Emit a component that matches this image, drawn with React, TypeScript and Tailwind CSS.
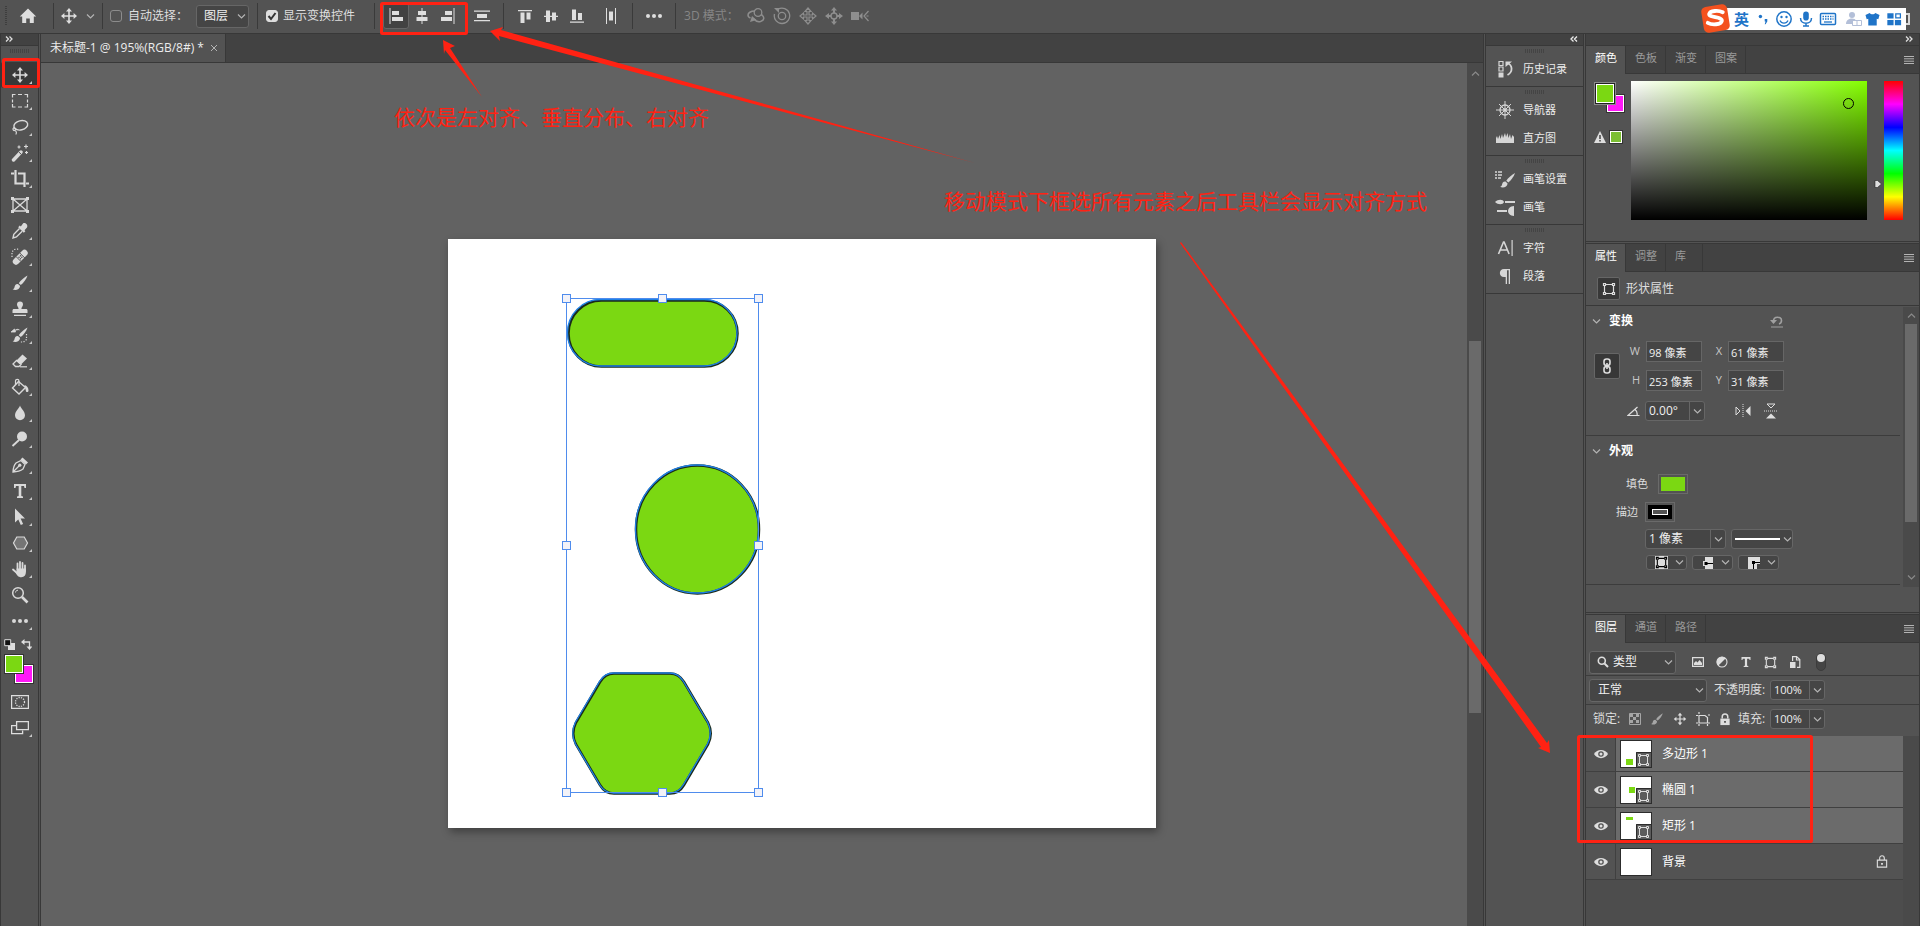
import { useState } from "react";
import type { ReactNode } from "react";

type IconProps = { children: ReactNode; box?: string; className?: string };

const Icon = ({ children, box = "0 0 18 18", className = "size-[18px]" }: IconProps) => (
    <svg viewBox={box} className={`shrink-0 ${className}`} fill="currentColor" stroke="none" aria-hidden="true">
        {children}
    </svg>
);

const line = { fill: "none", stroke: "currentColor" };

const MoveIcon = ({ className }: { className?: string }) => (
    <Icon className={className}>
        <path d="M9 1l3 3.4H9.8v3.8h3.8V6L17 9l-3.400 3V9.800H9.800v3.800H12L9 17l-3-3.400h2.200V9.800H4.400V12L1 9l3.400-3v2.200h3.800V4.400H6z" />
    </Icon>
);

const Chevron = ({ className = "text-[#b4b4b4]" }: { className?: string }) => (
    <Icon box="0 0 9 9" className={`size-[9px] ${className}`}>
        <path d="M1 2.500l3.500 3.500L8 2.500" {...line} strokeWidth="1.200" />
    </Icon>
);

const PathIcon = ({ className = "size-[14px]" }: { className?: string }) => (
    <Icon box="0 0 14 14" className={className}>
        <path d="M4 2.500h6M4 11.500h6M2.500 4v6M11.500 4v6" {...line} strokeWidth="1.200" />
        <path d="M1.500 1.500h2v2h-2zM10.500 1.500h2v2h-2zM1.500 10.500h2v2h-2zM10.500 10.500h2v2h-2z" {...line} strokeWidth="1.200" />
    </Icon>
);

const BrushShape = () => (
    <>
        <path d="M16.500 1.500c-3 1.500-7 5-8.700 7.700l2 1.800C12.400 9 15.500 5 16.500 1.500z" />
        <path d="M7 10c-2.500-.2-3.200 1.600-3.600 3.400-.2 1.200-1.200 1.700-2 1.900 2.600 1.600 7.300.9 7.700-3.200z" />
    </>
);

const tools: { name: string; flyout?: boolean; icon: ReactNode }[] = [
    { name: "移动工具", flyout: true, icon: <MoveIcon className="size-[18px]" /> },
    {
        name: "矩形选框工具",
        flyout: true,
        icon: <Icon><path d="M1.500 5.500v-3h3M7 2.500h4M13.500 2.500h3v3M16.500 7.500v3M16.500 12v3h-3M11 15h-4M4.500 15h-3v-3M1.500 10.500v-3" {...line} strokeWidth="1.200" /></Icon>,
    },
    {
        name: "套索工具",
        flyout: true,
        icon: (
            <Icon>
                <ellipse cx="9.800" cy="7.300" rx="7" ry="4.600" transform="rotate(-14 9.800 7.300)" {...line} strokeWidth="1.400" />
                <path d="M3 9.500c-1.800 1.300-1 3.300.6 3 1.700-.3 1.500-2.600 0-2.500M4 12.500c1.500.8 1.800 2.500.8 4" {...line} strokeWidth="1.200" />
            </Icon>
        ),
    },
    {
        name: "魔棒工具",
        flyout: true,
        icon: (
            <Icon>
                <path d="M2.500 16l7.500-8" {...line} strokeWidth="3.400" strokeLinecap="round" />
                <path d="M8 8.200l2.300 2.100" stroke="#535353" strokeWidth="1" />
                <path d="M8 1.500v3M6.500 3h3M15 .5v4M13 2.500h4M15.500 7v3M14 8.500h3" {...line} strokeWidth="1.200" />
            </Icon>
        ),
    },
    {
        name: "裁剪工具",
        flyout: true,
        icon: <Icon><path d="M4.500 0v13.500H13M0 3.500h3M7 3.500h6.500V17M15 13.500h3" {...line} strokeWidth="2.200" /></Icon>,
    },
    {
        name: "图框工具",
        icon: (
            <Icon>
                <path d="M2 3h14v12H2zM2 3l14 12M16 3L2 15" {...line} strokeWidth="1.300" />
                <path d="M0 1h3v3H0zM15 1h3v3h-3zM0 14h3v3H0zM15 14h3v3h-3z" />
            </Icon>
        ),
    },
    {
        name: "吸管工具",
        flyout: true,
        icon: (
            <Icon>
                <path d="M12 1.500c1.600-1.400 5.500 1.200 4 4l-2.500 2.700.9 1-1.600 1.600-5.600-5.600 1.600-1.600 1 .9z" />
                <path d="M8.500 6.500L2.800 12.300l-.8 3.700 3.400-1 5.800-5.700" {...line} strokeWidth="1.400" />
            </Icon>
        ),
    },
    {
        name: "污点修复画笔工具",
        flyout: true,
        icon: (
            <Icon>
                <path d="M5 13.500l8.500-8.500" {...line} strokeWidth="6.400" strokeLinecap="round" />
                <path d="M5 8.500l5 5M8.800 5l5 5" stroke="#535353" strokeWidth="1" />
                <path d="M9.500 7.700l.01.01M8 9.200l.01.01M10.800 9.200l.01.01M9.500 10.700l.01.01" stroke="#535353" strokeWidth="1.500" strokeLinecap="round" />
                <path d="M1 9V4l2-2.500 5-.5" {...line} strokeWidth="1.200" strokeDasharray="1.200 1.600" />
            </Icon>
        ),
    },
    { name: "画笔工具", flyout: true, icon: <Icon><BrushShape /></Icon> },
    {
        name: "仿制图章工具",
        flyout: true,
        icon: (
            <Icon>
                <path d="M9 1.500a3 3 0 0 1 3 3c0 1.800-1.600 2.500-1.600 4.500H15c1 0 1.500.6 1.500 1.500V13h-15v-2.500C1.500 9.600 2 9 3 9h4.600c0-2-1.600-2.700-1.600-4.500a3 3 0 0 1 3-3zM3 14.700h12V16H3z" />
            </Icon>
        ),
    },
    {
        name: "历史记录画笔工具",
        flyout: true,
        icon: (
            <Icon>
                <BrushShape />
                <path d="M0 6l3.500-3 1 3zM4 4.500c1.500-1.500 3-1.500 4.500-.5" stroke="currentColor" strokeWidth=".8" />
                <path d="M15.500 8v5.500l-3 2.500h-3" {...line} strokeWidth="1.200" strokeDasharray="1.200 1.500" />
            </Icon>
        ),
    },
    {
        name: "橡皮擦工具",
        flyout: true,
        icon: (
            <Icon>
                <path d="M11.500 2.500l4.500 4-6 6L5.500 8.500z" />
                <path d="M5.500 8.500L2 12l2.500 2.500h3.500l2-2z" {...line} strokeWidth="1.300" />
                <path d="M9 14.800h7" {...line} strokeWidth="1.200" />
            </Icon>
        ),
    },
    {
        name: "油漆桶工具",
        flyout: true,
        icon: (
            <Icon>
                <path d="M7.500 3.500l7 6-6.500 6.500-6.500-6z" {...line} strokeWidth="1.400" />
                <path d="M4.500 7V3c0-2.300 3.500-2.300 3.500 0v5" {...line} strokeWidth="1.200" />
                <path d="M13.500 7c2.500.7 4 2.500 4 5.500 0 2-2.700 2-2.700 0z" />
            </Icon>
        ),
    },
    { name: "模糊工具", flyout: true, icon: <Icon><path d="M9 1.500c1 3 5 6 5 9.800a5 5 0 0 1-10 0C4 7.500 8 4.500 9 1.500z" /></Icon> },
    {
        name: "减淡工具",
        flyout: true,
        icon: (
            <Icon>
                <circle cx="11" cy="6.500" r="5" />
                <path d="M8 10l-6.500 6" {...line} strokeWidth="1.900" />
            </Icon>
        ),
    },
    {
        name: "钢笔工具",
        flyout: true,
        icon: (
            <Icon>
                <path d="M2 16c.2-4 1.500-7.500 3-9l5-2.500 4 4-2 4.500c-2 1.500-6 2.800-10 3zM2 16l6.500-6.500" {...line} strokeWidth="1.300" />
                <circle cx="8.800" cy="9.200" r="1.600" />
                <path d="M11.500 1.500l5.500 5-2 2-5.500-5z" />
            </Icon>
        ),
    },
    {
        name: "文字工具",
        flyout: true,
        icon: <Icon><path d="M3 2h12v4h-1.500L13 4h-2.700v10l1.700.6V16H6v-1.400l1.700-.6V4H5l-.5 2H3z" /></Icon>,
    },
    { name: "路径选择工具", flyout: true, icon: <Icon><path d="M4 .5v14l3.300-3 2.500 5.500 2.300-1-2.500-5.500H14z" /></Icon> },
    {
        name: "多边形工具",
        flyout: true,
        icon: <Icon><path d="M5.800 3h7.400L16.500 9l-3.300 6H5.800L2.500 9z" fill="#757575" stroke="currentColor" strokeWidth="1.200" /></Icon>,
    },
    {
        name: "抓手工具",
        flyout: true,
        icon: (
            <Icon>
                <path d="M6.500 10V3.500M9 9.500V2M11.500 10V3M14 11V5.500M6 13L2 9.500" {...line} strokeWidth="1.800" strokeLinecap="round" />
                <path d="M5.600 8.500h9.300v3.500c0 3-1.600 5.200-4.500 5.200-3.500 0-4.600-2.200-6-5l1.200-.7z" />
            </Icon>
        ),
    },
    {
        name: "缩放工具",
        icon: (
            <Icon>
                <circle cx="7" cy="7" r="5.300" {...line} strokeWidth="1.500" />
                <path d="M4.500 6.500c.2-1.500 1-2.200 2.500-2.300" {...line} />
                <path d="M11 11l5.500 5.500" {...line} strokeWidth="2.600" />
            </Icon>
        ),
    },
    {
        name: "编辑工具栏",
        flyout: true,
        icon: <Icon><circle cx="3" cy="9" r="2" /><circle cx="9" cy="9" r="2" /><circle cx="15" cy="9" r="2" /></Icon>,
    },
];

const alignIcons = {
    left: <Icon box="0 0 16 16" className="size-[16px]"><path d="M1.500 0h1v16h-1zM4 3h7v4H4zM4 9h11v4H4z" /></Icon>,
    center: <Icon box="0 0 16 16" className="size-[16px]"><path d="M7.500 0h1v16h-1zM4 3h8v4H4zM2.500 9h11v4h-11z" /></Icon>,
    right: <Icon box="0 0 16 16" className="size-[16px]"><path d="M13.500 0h1v16h-1zM5 3h7v4H5zM1 9h11v4H1z" /></Icon>,
    vspread: <Icon box="0 0 16 16" className="size-[16px]"><path d="M0 2.500h16v1.300H0zM3 6h10v4H3zM0 12h16v1.300H0z" /></Icon>,
    top: <Icon box="0 0 16 16" className="size-[16px]"><path d="M1 2h14v1.200H1zM3.500 4.500h4V15h-4zM9.500 4.500h4v7h-4z" /></Icon>,
    middle: <Icon box="0 0 16 16" className="size-[16px]"><path d="M1 7.800h14V9H1zM3 2.500h4v11.500H3zM9 4.500h4v8H9z" /></Icon>,
    bottom: <Icon box="0 0 16 16" className="size-[16px]"><path d="M1 13.500h14v1.200H1zM3 1.500h4V12H3zM9 5h4v7H9z" /></Icon>,
    hspread: <Icon box="0 0 16 16" className="size-[16px]"><path d="M3 0h1v16H3zM6 3.500h4v9H6zM12 0h1v16h-1z" /></Icon>,
};

const Divider = ({ className = "" }: { className?: string }) => <span className={`h-[26px] w-px bg-[#3a3a3a] ${className}`} />;

const Grip = ({ className = "" }: { className?: string }) => (
    <span className={`mx-auto h-[4px] w-[20px] bg-[repeating-linear-gradient(90deg,#444_0_1px,transparent_1px_2px)] ${className}`} />
);

const IconButton = ({ label, pressed, children }: { label: string; pressed?: boolean; children: ReactNode }) => (
    <button
        type="button"
        aria-label={label}
        className={`flex h-[26px] w-[26px] items-center justify-center rounded-[3px] border ${pressed ? "border-[#666] bg-[#424242]" : "border-transparent"}`}
    >
        {children}
    </button>
);

const SelectBox = ({ label, value, className, lead }: { label: string; value: string; className: string; lead?: ReactNode }) => (
    <div className={`relative flex items-center rounded-[3px] border border-[#666] bg-[#454545] ${className}`}>
        {lead}
        <select aria-label={label} className="h-full w-full appearance-none bg-transparent text-[12px] text-[#f0f0f0] outline-none">
            <option>{value}</option>
        </select>
        <span className="pointer-events-none absolute right-[2px]"><Chevron /></span>
    </div>
);

// Select whose value is a drawing
const GraphicSelect = ({ label, className, children }: { label: string; className: string; children: ReactNode }) => (
    <div className={`relative flex items-center justify-between rounded-[3px] border border-[#666] bg-[#454545] ${className}`}>
        {children}
        <Chevron />
        <select aria-label={label} className="absolute inset-0 opacity-0"><option>{label}</option></select>
    </div>
);

const Combo = ({ label, value, className, text = "text-[12px]" }: { label: string; value: string; className: string; text?: string }) => (
    <div className={`flex h-[20px] rounded-[3px] border border-[#666] bg-[#454545] ${className}`}>
        <input aria-label={label} defaultValue={value} className={`min-w-0 flex-1 bg-transparent pl-[3px] text-[#f0f0f0] outline-none ${text}`} />
        <button type="button" aria-label={`${label}选项`} className="flex w-[15px] items-center justify-center border-l border-[#666]">
            <Chevron />
        </button>
    </div>
);

const OptionsBar = () => {
    const [auto, setAuto] = useState(false);
    const [showTransform, setShowTransform] = useState(true);

    return (
        <header className="flex h-[34px] items-center border-b border-[#383838] pb-px text-[12px] text-[#dedede]">
            <span className="ml-[5px] h-[20px] w-[2px] bg-[repeating-linear-gradient(#3e3e3e_0_1px,transparent_1px_2px)]" />
            <button type="button" aria-label="主页" className="ml-[12px]">
                <Icon><path d="M9 1.500L.8 9.500h2.400V16h4v-4.500h3.600V16h4V9.500h2.400z" /></Icon>
            </button>
            <Divider className="ml-[16px]" />
            <button type="button" aria-label="移动工具预设" className="ml-[6px] flex items-center gap-[8px]">
                <MoveIcon className="size-[18px]" />
                <Chevron />
            </button>
            <Divider className="ml-[7px]" />
            <label className="ml-[7px] flex items-center gap-[6px]">
                <input type="checkbox" checked={auto} onChange={(e) => setAuto(e.target.checked)} className="size-[12px] appearance-none rounded-[3px] border border-[#8c8c8c] checked:bg-[#dedede]" />
                <span>自动选择：</span>
            </label>
            <SelectBox label="自动选择" value="图层" className="ml-[8px] h-[23px] w-[53px] pl-[7px]" />
            <Divider className="ml-[8px]" />
            <label className="relative ml-[8px] flex items-center gap-[5px]">
                <input type="checkbox" checked={showTransform} onChange={(e) => setShowTransform(e.target.checked)} className="size-[12px] appearance-none rounded-[3px] border border-[#8c8c8c] checked:border-[#dedede] checked:bg-[#dedede]" />
                {showTransform && (
                    <svg viewBox="0 0 12 12" className="pointer-events-none absolute left-0 size-[12px]">
                        <path d="M2.500 6l2.500 3 4.500-6" fill="none" stroke="#333" strokeWidth="2" />
                    </svg>
                )}
                <span>显示变换控件</span>
            </label>
            <Divider className="ml-[19px]" />
            <div className="ml-[8px] flex">
                <IconButton label="左对齐" pressed>{alignIcons.left}</IconButton>
                <IconButton label="水平居中对齐">{alignIcons.center}</IconButton>
                <IconButton label="右对齐">{alignIcons.right}</IconButton>
            </div>
            <div className="ml-[8px] flex"><IconButton label="垂直分布">{alignIcons.vspread}</IconButton></div>
            <Divider className="ml-[8px]" />
            <div className="ml-[8px] flex">
                <IconButton label="顶对齐">{alignIcons.top}</IconButton>
                <IconButton label="垂直居中对齐">{alignIcons.middle}</IconButton>
                <IconButton label="底对齐">{alignIcons.bottom}</IconButton>
            </div>
            <div className="ml-[8px] flex"><IconButton label="水平分布">{alignIcons.hspread}</IconButton></div>
            <Divider className="ml-[8px]" />
            <div className="ml-[8px] flex">
                <IconButton label="更多选项">
                    <Icon><circle cx="3" cy="9" r="2" /><circle cx="9" cy="9" r="2" /><circle cx="15" cy="9" r="2" /></Icon>
                </IconButton>
            </div>
            <Divider className="ml-[8px]" />
            <span className="ml-[8px] w-[59px] whitespace-nowrap text-[#868686]">3D 模式：</span>
            <div className="flex text-[#8e8e8e]">
                <IconButton label="环绕移动 3D 相机">
                    <Icon>
                        <circle cx="11" cy="5.500" r="3.800" {...line} strokeWidth="1.300" />
                        <path d="M8 4C3.500 4 1 6 1 8c0 1.500 1 2.500 2.500 3M14 7.500c4 2 3.500 6-.5 7-2.500.5-5-.5-6.500-2.500" {...line} strokeWidth="1.500" />
                        <path d="M3 15l2-6 4.500 4z" />
                    </Icon>
                </IconButton>
                <IconButton label="滚动 3D 相机">
                    <Icon>
                        <circle cx="9" cy="9" r="3.700" {...line} strokeWidth="1.300" />
                        <path d="M5 2.200A7.700 7.700 0 1 1 1.500 7" {...line} strokeWidth="1.300" />
                        <path d="M1 1h5v5z" />
                    </Icon>
                </IconButton>
                <IconButton label="平移 3D 相机">
                    <Icon><path d="M9 1l3 3.500h-2V8h3.500V6L17 9l-3.500 3v-2H10v3.500h2L9 17l-3-3.500h2V10H4.500v2L1 9l3.500-3v2H8V4.500H6z" {...line} strokeWidth="1.200" /></Icon>
                </IconButton>
                <IconButton label="滑动 3D 相机">
                    <Icon>
                        <circle cx="9" cy="9" r="3" {...line} strokeWidth="1.400" />
                        <path d="M9 0l3 3.500H10V6H8V3.500H6zM9 18l-3-3.500h2V12h2v2.500h2zM0 9l4-3v2h2v2H4v2zM18 9l-4-3v2h-2v2h2v2z" />
                    </Icon>
                </IconButton>
                <IconButton label="变焦 3D 相机">
                    <Icon><path d="M0 5h8v8H0zM8 9l3.500-3.500v7z" /><path d="M17.500 4l-4.500 5 4.500 5M15.500 9h2" {...line} strokeWidth="1.200" /></Icon>
                </IconButton>
            </div>
        </header>
    );
};

const ImeBar = () => (
    <div className="absolute top-[4px] right-[10px] flex h-[29px] items-center">
        <svg viewBox="0 0 30 30" className="z-10 -mr-[10px] size-[29px]">
            <rect x="1.500" y="1.500" width="27" height="27" rx="5" transform="rotate(-9 15 15)" fill="#f4511e" />
            <path d="M22.500 8.500c-4-2-13-2-14 1.800-.8 4.200 14 2.500 13 7.200-1 4-10 4.500-14.500 2" fill="none" stroke="#fff" strokeWidth="4" strokeLinecap="round" />
        </svg>
        <div className="flex h-[22px] items-center gap-[6px] bg-white pr-[4px] pl-[14px] text-[#1f74c8]">
            <span className="w-[17px] text-[15px] leading-[22px] font-bold">英</span>
            <Icon box="0 0 14 18" className="h-[18px] w-[12px]"><circle cx="4" cy="6" r="2" /><path d="M9 9h3v3l-2 3h-1l1-3H9z" /></Icon>
            <Icon>
                <circle cx="9" cy="9" r="7.200" {...line} strokeWidth="1.500" />
                <circle cx="6.500" cy="7" r="1.200" /><circle cx="11.500" cy="7" r="1.200" />
                <path d="M5 10.500c1.500 3.500 6.500 3.500 8 0" {...line} strokeWidth="1.300" />
            </Icon>
            <Icon box="0 0 14 18" className="h-[18px] w-[14px]"><rect x="4.200" y="1.500" width="5.600" height="9" rx="2.800" /><path d="M1.500 8c0 7 11 7 11 0M7 13v3M4 16h6" {...line} strokeWidth="1.500" /></Icon>
            <Icon>
                <rect x="1.500" y="3.500" width="15" height="11" rx="1" {...line} strokeWidth="1.500" />
                <path d="M3.500 6.500h11M3.500 9h11" {...line} strokeWidth="1.500" strokeDasharray="1.500 1" /><path d="M5 12h8" {...line} strokeWidth="1.300" />
            </Icon>
            <Icon className="ml-[2px] -mr-[4px] size-[18px] text-[#b3bfd8]">
                <circle cx="7" cy="5" r="3" /><path d="M1 14c0-6 9-7 10-3H7v3z" />
                <path d="M7.500 10.500h9v5h-9zM12 10.500v5" {...line} />
            </Icon>
            <Icon box="0 0 16 18" className="h-[18px] w-[15px]"><path d="M5 2.500c1 2 5 2 6 0l4.500 2.300-1.300 4.400-1.700-.5V16h-9V8.700l-1.700.5L.5 4.800z" /></Icon>
            <Icon className="size-[16px]"><path d="M1.500 2.500h7v6h-7zM1.500 10h7v6h-7zM10 10h7v6h-7z" /><path d="M11 3.200h5.200v4.600H11z" {...line} strokeWidth="1.400" /></Icon>
        </div>
        <span className="h-[12px] w-[4px] border-2 border-l-0 border-[#d6d6d6]" />
    </div>
);

const Toolbox = () => (
    <aside className="flex w-[39px] flex-col border-x border-[#383838]">
        <div className="h-[12px] border-b border-[#383838] bg-[#424242] pl-[4px]">
            <Icon box="0 0 8 10" className="h-[10px] w-[8px]"><path d="M1 2.500L3.500 5 1 7.500M4.500 2.500L7 5 4.500 7.500" {...line} strokeWidth="1.300" /></Icon>
        </div>
        <Grip className="mt-[3px]" />
        <div className="mt-[9px] flex flex-col text-[#d9d9d9]">
            {tools.map((tool, i) => (
                <button
                    key={tool.name}
                    type="button"
                    aria-label={tool.name}
                    className={`relative flex h-[26px] items-center justify-center ${i === 0 ? "rounded-[2px] bg-[#383838]" : ""}`}
                >
                    {tool.icon}
                    {tool.flyout && (
                        <svg viewBox="0 0 3 3" className="absolute right-[6px] bottom-[4px] size-[3px]"><path d="M3 0v3H0z" fill="#c8c8c8" /></svg>
                    )}
                </button>
            ))}
        </div>
        <div className="mt-[5px] flex justify-between pr-[6px] pl-[3px]">
            <button type="button" aria-label="默认前景色和背景色">
                <Icon box="0 0 11 11" className="size-[11px]"><path d="M4 4h7v7H4z" /><path d="M.7.7h6v6h-6z" fill="#111" stroke="currentColor" /></Icon>
            </button>
            <button type="button" aria-label="切换前景色和背景色">
                <Icon box="0 0 11 11" className="size-[11px]"><path d="M3 3h5.500v5" {...line} strokeWidth="1.300" /><path d="M0 3l3.500-3v6zM8.500 11l-3-3.500h6z" /></Icon>
            </button>
        </div>
        <div className="mt-[4px] grid h-[30px] grid-cols-[10px_10px_10px] grid-rows-[10px_10px_10px] pl-[3px]">
            <button type="button" aria-label="背景色" className="col-span-2 col-start-2 row-span-2 row-start-2 border border-[#333] bg-[#ff19f8] ring-1 ring-white ring-inset" />
            <button type="button" aria-label="前景色" className="z-10 col-span-2 col-start-1 row-span-2 row-start-1 border border-[#333] bg-[#7bd812] ring-1 ring-white ring-inset" />
        </div>
        <button type="button" aria-label="快速蒙版" className="mt-[5px] flex h-[26px] items-center justify-center">
            <Icon><path d="M.6 2.600h16.800v12.800H.6z" {...line} strokeWidth="1.200" /><circle cx="9" cy="9" r="4.500" {...line} strokeWidth="1.300" strokeDasharray="1.200 1.200" /></Icon>
        </button>
        <button type="button" aria-label="屏幕模式" className="relative flex h-[26px] items-center justify-center">
            <Icon><path d="M5.600 2.600h11.800v8H5.600z" {...line} strokeWidth="1.300" /><path d="M5 6.600H.6v8h11v-3" {...line} strokeWidth="1.300" /></Icon>
            <svg viewBox="0 0 3 3" className="absolute right-[6px] bottom-[4px] size-[3px]"><path d="M3 0v3H0z" fill="#c8c8c8" /></svg>
        </button>
    </aside>
);

const hexagon =
    "M166 434.500H222Q231 434.500 236 443L260 483.500Q265.500 494.500 260 505.500L236 546Q231 554.500 222 554.500H166Q157 554.500 152 546L128 505.500Q122.500 494.500 128 483.500L152 443Q157 434.500 166 434.500Z";

const handles = [
    [118, 59], [214, 59], [310, 59],
    [118, 306], [310, 306],
    [118, 553], [214, 553], [310, 553],
];

const Artboard = () => (
    <div className="absolute top-[176px] left-[407px] h-[589px] w-[708px] bg-white shadow-[2px_4px_8px_rgba(0,0,0,0.35)]">
        <svg viewBox="0 0 708 589" className="h-full w-full" fill="none">
            <g fill="#7bd812" stroke="#1a2a1a" strokeWidth="2.500">
                <rect x="120.500" y="61.500" width="169" height="66" rx="33" />
                <ellipse cx="249.500" cy="290.500" rx="61.500" ry="64" />
                <path d={hexagon} />
            </g>
            <g stroke="#1f80e6" strokeWidth="1.300">
                <rect x="119.500" y="60.500" width="169.500" height="66.500" rx="33" />
                <ellipse cx="249" cy="290" rx="61.500" ry="64" />
                <path d={hexagon} transform="translate(-.5 -.5)" />
            </g>
            <rect x="118.500" y="59.500" width="192" height="494" stroke="#4f8ced" />
            {handles.map(([x, y]) => (
                <rect key={`${x}-${y}`} x={x - 3.5} y={y - 3.5} width="8" height="8" fill="#f2f2f8" stroke="#4f8ced" />
            ))}
        </svg>
    </div>
);

const Document = () => (
    <main className="ml-px flex min-w-0 flex-1 flex-col border-x border-[#383838]">
        <div className="flex h-[29px] border-b border-[#383838] bg-[#424242]">
            <div className="flex items-center gap-[6px] border-r border-[#383838] bg-[#535353] pr-[7px] pl-[9px] text-[12px] whitespace-nowrap text-[#ececec]">
                <span>未标题-1 @ 195%(RGB/8#) *</span>
                <button type="button" aria-label="关闭">
                    <Icon box="0 0 8 8" className="size-[8px] text-[#b4b4b4]"><path d="M1 1l6 6M7 1L1 7" {...line} /></Icon>
                </button>
            </div>
        </div>
        <div className="flex flex-1">
            <div className="relative flex-1 overflow-hidden bg-[#626262]"><Artboard /></div>
            <div className="flex w-[16px] flex-col items-center bg-[#4a4a4a]">
                <Chevron className="mt-[6px] rotate-180 text-[#8a8a8a]" />
                <span className="mt-[263px] h-[372px] w-[12px] bg-[#6a6a6a]" />
            </div>
        </div>
    </main>
);

const dockGroups: { label: string; icon: ReactNode }[][] = [
    [
        {
            label: "历史记录",
            icon: <Icon><path d="M3 1.500h4v4H3zM3 7h4v4H3z" {...line} strokeWidth="1.200" /><path d="M2.500 12.500h5v5h-5z" /><path d="M11 3c6 2 6 9 .5 12" {...line} strokeWidth="1.800" /><path d="M9.500 7V1.500H16z" /></Icon>,
        },
    ],
    [
        {
            label: "导航器",
            icon: <Icon><circle cx="9" cy="9" r="5" {...line} strokeWidth="1.300" /><path d="M9 0v18M0 9h18M3 3l12 12M15 3L3 15" {...line} strokeWidth="1" /><circle cx="9" cy="9" r="1.800" /></Icon>,
        },
        {
            label: "直方图",
            icon: <Icon><path d="M0 14V9l1-2 1 3 1.500-4 1 4L6 5l1 4 2-5 1 4 1.500-4 1 5L14 5l1 5 1.500-4L18 8v6z" /></Icon>,
        },
    ],
    [
        {
            label: "画笔设置",
            icon: <Icon box="0 0 20 18" className="h-[18px] w-[20px]"><path d="M0 2h2M3 2h4M0 5h2M3 5h4M0 8h2M3 8h3" {...line} strokeWidth="1.300" /><g transform="translate(3.500 1.500)"><BrushShape /></g></Icon>,
        },
        {
            label: "画笔",
            icon: <Icon box="0 0 20 18" className="h-[18px] w-[20px]"><path d="M0 4c3-3 8-3 9 0-1 3-6 3-9 0zM10 3h10v2H10zM2 12h10v2H2zM19 8v10c-4 0-6-3-6-5s2-5 6-5z" /></Icon>,
        },
    ],
    [
        {
            label: "字符",
            icon: <Icon><path d="M2.500 15L7.500 3h.6l5 12M4 11h7.500" {...line} strokeWidth="1.600" /><path d="M15.500 1h1.200v16h-1.200z" /></Icon>,
        },
        {
            label: "段落",
            icon: <Icon><path d="M8 2h6v15h-1.300V3.300h-1.700V17H9.700v-7H8C2.500 10 2.500 2 8 2z" /></Icon>,
        },
    ],
];

const Dock = () => (
    <aside className="ml-px w-[99px] border-x border-[#383838] text-[11px] text-[#ececec]">
        <div className="flex h-[12px] justify-end border-b border-[#383838] bg-[#424242] pr-[5px]">
            <Icon box="0 0 8 10" className="h-[10px] w-[8px]"><path d="M3.500 2.500L1 5l2.500 2.500M7 2.500L4.500 5 7 7.500" {...line} strokeWidth="1.300" /></Icon>
        </div>
        {dockGroups.map((group, i) => (
            <div key={i} className="flex flex-col border-b border-[#383838] pt-[3px] pb-[3px]">
                <Grip className="mb-[2px]" />
                {group.map((item) => (
                    <button key={item.label} type="button" className="flex h-[28px] items-center gap-[8px] pl-[9px]">
                        <span className="flex w-[20px] justify-center text-[#d6d6d6]">{item.icon}</span>
                        {item.label}
                    </button>
                ))}
            </div>
        ))}
    </aside>
);

const PanelTabs = ({ tabs }: { tabs: string[] }) => (
    <div className="flex h-[28px] bg-[#424242] text-[11px]">
        {tabs.map((tab, i) => (
            <button
                key={tab}
                type="button"
                className={`border-r border-[#383838] pb-[3px] pl-[9px] text-left ${tab.length > 1 ? "w-[40px]" : "w-[37px]"} ${i === 0 ? "bg-[#535353] text-white" : "border-b text-[#9a9a9a]"}`}
            >
                {tab}
            </button>
        ))}
        <div className="flex flex-1 items-center justify-end border-b border-[#383838] pr-[5px]">
            <button type="button" aria-label="面板菜单">
                <Icon box="0 0 10 8" className="h-[8px] w-[10px] text-[#b4b4b4]"><path d="M0 .5h10M0 2.800h10M0 5.200h10M0 7.500h10" {...line} /></Icon>
            </button>
        </div>
    </div>
);

const ColorPanel = () => (
    <section className="border-b border-[#383838]">
        <PanelTabs tabs={["颜色", "色板", "渐变", "图案"]} />
        <div className="flex h-[167px] pt-[7px] pl-[8px]">
            <div className="w-[37px] pt-[2px]">
                <div className="ml-px grid grid-cols-[11px_9px_10px] grid-rows-[11px_10px_9px]">
                    <button type="button" aria-label="背景色" className="col-span-2 col-start-2 row-span-2 row-start-2 border border-[#333] bg-[#ff19f8] ring-1 ring-white ring-inset" />
                    <button type="button" aria-label="前景色" className="z-10 col-span-2 col-start-1 row-span-2 row-start-1 border border-[#222] bg-[#7bd812] ring-1 ring-white outline outline-[#8a8a8a] ring-inset" />
                </div>
                <div className="mt-[17px] flex items-center gap-[3px]">
                    <Icon box="0 0 12 12" className="size-[12px]"><path d="M6 0l6 12H0z" /><path d="M6 4v4M6 9v1.500" stroke="#444" strokeWidth="1.500" /></Icon>
                    <span className="size-[14px] border border-[#333] bg-[#7cbf34] ring-1 ring-white ring-inset" />
                </div>
            </div>
            <div className="relative h-[139px] flex-1 bg-[linear-gradient(to_top,#000,transparent),linear-gradient(to_right,#fff,#84ff00)]">
                <span className="absolute top-[17px] right-[13px] size-[11px] rounded-full border border-black" />
            </div>
            <div className="relative mr-[16px] ml-[17px] h-[139px] w-[19px] bg-[linear-gradient(#f00,#f0f,#00f,#0ff,#0f0,#ff0,#f00)]">
                <svg viewBox="0 0 8 8" className="absolute top-[99px] -left-[10px] size-[8px]"><path d="M1 .5h2.500l4 3.500-4 3.500H1z" fill="#dedede" stroke="#222" strokeWidth=".6" /></svg>
                <input type="range" aria-label="色相" className="absolute inset-0 h-full w-full opacity-0" />
            </div>
        </div>
    </section>
);

const NumberField = ({ label, value }: { label: string; value: string }) => (
    <label className="flex items-center justify-end gap-[6px] text-[11px] text-[#c8c8c8]">
        {label}
        <input defaultValue={value} className="h-[21px] w-[56px] border border-[#666] bg-[#454545] pl-[2px] text-[11px] text-[#f0f0f0] outline-none" />
    </label>
);

const PropertiesPanel = () => (
    <section className="mt-px flex flex-col border-y border-[#383838]">
        <PanelTabs tabs={["属性", "调整", "库"]} />
        <div className="flex h-[34px] items-center gap-[6px] border-b border-[#383838] pl-[11px] text-[12px] text-[#dedede]">
            <span className="flex size-[23px] items-center justify-center rounded-[2px] border border-[#666] bg-[#383838]"><PathIcon /></span>
            形状属性
        </div>
        <div className="flex h-[306px]">
            <div className="min-w-0 flex-1 pr-[3px] text-[#dedede]">
                <div className="h-[130px] border-b border-[#3c3c3c] pt-[5px]">
                    <div className="flex h-[20px] items-center pl-[6px]">
                        <Chevron />
                        <h3 className="ml-[8px] w-[161px] text-[12px] font-bold text-white">变换</h3>
                        <button type="button" aria-label="重置变换">
                            <Icon box="0 0 14 13" className="h-[13px] w-[14px] text-[#a0a0a0]"><path d="M3.500 6c0-5 8-5 8-.5 0 2-1 3-2.500 3.500" {...line} strokeWidth="1.600" /><path d="M0 5h7l-3.500 4zM1 11.500h12v1H1z" /></Icon>
                        </button>
                    </div>
                    <div className="mt-[10px] flex items-center">
                        <button type="button" aria-label="链接宽高" className="ml-[8px] flex size-[26px] items-center justify-center rounded-[2px] border border-[#666] bg-[#383838]">
                            <Icon box="0 0 10 16" className="h-[16px] w-[10px]"><rect x="2" y="1" width="6" height="6.500" rx="2.500" {...line} strokeWidth="1.600" /><rect x="2" y="8.500" width="6" height="6.500" rx="2.500" {...line} strokeWidth="1.600" /><path d="M5 5v6" {...line} strokeWidth="1.600" /></Icon>
                        </button>
                        <div className="ml-[8px] grid grid-cols-[74px_82px] gap-y-[8px]">
                            <NumberField label="W" value="98 像素" />
                            <NumberField label="X" value="61 像素" />
                            <NumberField label="H" value="253 像素" />
                            <NumberField label="Y" value="31 像素" />
                        </div>
                    </div>
                    <div className="mt-[10px] flex items-center pl-[41px]">
                        <Icon box="0 0 13 10" className="h-[10px] w-[13px]"><path d="M12.500 9.500H1L10.500 1M8 3.500c2 1.500 2.500 3.500 2 6" {...line} strokeWidth="1.200" /></Icon>
                        <Combo label="旋转角度" value="0.00°" className="ml-[5px] w-[60px]" />
                        <button type="button" aria-label="水平翻转" className="ml-[30px]">
                            <Icon box="0 0 16 14" className="h-[14px] w-[16px]"><path d="M1 3l4 4-4 4z" {...line} /><path d="M15.500 2v10l-5-5z" /><path d="M8 0v14" {...line} strokeDasharray="1 1" /></Icon>
                        </button>
                        <button type="button" aria-label="垂直翻转" className="ml-[13px]">
                            <Icon box="0 0 14 16" className="h-[16px] w-[14px]"><path d="M3 1h8L7 5z" {...line} /><path d="M2 15.500h10l-5-5z" /><path d="M0 8h14" {...line} strokeDasharray="1 1" /></Icon>
                        </button>
                    </div>
                </div>
                <div className="h-[149px] border-b border-[#3c3c3c] pt-[5px] text-[11px]">
                    <div className="flex h-[20px] items-center pl-[6px]">
                        <Chevron />
                        <h3 className="ml-[8px] text-[12px] font-bold text-white">外观</h3>
                    </div>
                    <div className="mt-[13px] flex h-[20px] items-center gap-[10px] pl-[40px]">
                        填色
                        <button type="button" aria-label="填色" className="h-[20px] w-[30px] border border-[#6a6a6a] p-[2px]"><span className="block h-full bg-[#7bd812]" /></button>
                    </div>
                    <div className="mt-[8px] flex h-[20px] items-center gap-[7px] pl-[30px]">
                        描边
                        <button type="button" aria-label="描边" className="h-[20px] w-[30px] border border-[#6a6a6a] p-[2px]">
                            <span className="flex h-full items-center justify-center bg-black"><span className="h-[6px] w-[16px] border border-white bg-[#535353]" /></span>
                        </button>
                    </div>
                    <div className="mt-[7px] flex gap-[5px] pl-[59px]">
                        <Combo label="描边宽度" value="1 像素" className="w-[81px]" />
                        <GraphicSelect label="描边类型" className="h-[20px] w-[62px] pl-[3px]"><span className="h-[2px] w-[45px] bg-white" /></GraphicSelect>
                    </div>
                    <div className="mt-[6px] flex gap-[5px] pl-[60px]">
                        <GraphicSelect label="对齐" className="h-[15px] w-[41px] pr-[2px] pl-[8px]">
                            <span className="bg-[#dedede] text-black"><PathIcon className="size-[13px]" /></span>
                        </GraphicSelect>
                        <GraphicSelect label="端点" className="h-[15px] w-[41px] pr-[2px] pl-[10px]">
                            <Icon box="0 0 10 12" className="h-[12px] w-[10px]"><path d="M2 0h8v12H2v-3H0V4h2z" /><path d="M1.500 5h3v3h-3zM4 6h6v1H4z" fill="#000" /></Icon>
                        </GraphicSelect>
                        <GraphicSelect label="角点" className="h-[15px] w-[41px] pr-[2px] pl-[9px]">
                            <Icon box="0 0 12 12" className="h-[12px] w-[12px]"><path d="M0 0h12v7H9v5H0z" /><path d="M4 4h3v3H4zM6 5h6v1H6zM5 6h1v6H5z" fill="#000" /></Icon>
                        </GraphicSelect>
                    </div>
                </div>
            </div>
            <div className="mt-px flex h-[280px] w-[16px] flex-col items-center bg-[#4a4a4a]">
                <Chevron className="mt-[4px] rotate-180 text-[#8a8a8a]" />
                <span className="mt-[4px] h-[198px] w-[12px] bg-[#6a6a6a]" />
                <Chevron className="mt-[51px] text-[#8a8a8a]" />
            </div>
        </div>
    </section>
);

const layers = [
    { name: "多边形 1", selected: true, shape: <rect x="5" y="18" width="7" height="6" /> },
    { name: "椭圆 1", selected: true, shape: <rect x="8" y="10" width="6" height="6" /> },
    { name: "矩形 1", selected: true, shape: <rect x="5" y="4" width="7" height="3" /> },
    { name: "背景", selected: false, shape: null },
];

const LayersPanel = () => (
    <section className="mt-px flex flex-1 flex-col border-t border-[#383838] text-[#dedede]">
        <PanelTabs tabs={["图层", "通道", "路径"]} />
        <div className="flex h-[33px] items-center border-b border-[#3c3c3c] pt-[6px] pl-[3px]">
            <SelectBox
                label="图层过滤"
                value="类型"
                className="h-[23px] w-[87px] pl-[7px]"
                lead={<Icon box="0 0 12 12" className="mr-[4px] size-[12px]"><circle cx="4.800" cy="4.800" r="3.500" {...line} strokeWidth="1.600" /><path d="M7.500 7.500l3.500 3.500" {...line} strokeWidth="2" /></Icon>}
            />
            <div className="ml-[16px] flex items-center gap-[12px]">
                <button type="button" aria-label="像素图层过滤"><Icon box="0 0 12 12" className="size-[12px]"><path d="M.6 1.600h10.800v8.800H.6z" {...line} strokeWidth="1.200" /><path d="M2 9V7l2-2 1.500 1.500L7.500 4 10 7v2z" /></Icon></button>
                <button type="button" aria-label="调整图层过滤"><Icon box="0 0 12 12" className="size-[12px]"><circle cx="6" cy="6" r="5" {...line} strokeWidth="1.100" /><path d="M2.200 2.200A5.400 5.400 0 0 1 9.800 2.200L2.200 9.800A5.400 5.400 0 0 1 2.200 2.200z" /></Icon></button>
                <button type="button" aria-label="文字图层过滤"><Icon box="0 0 12 12" className="size-[12px]"><path d="M1.500 1h9v3H9.600l-.4-1.300H7.100v7l1.200.4V11H3.700v-.9l1.200-.4v-7H2.800L2.400 4h-.9z" /></Icon></button>
                <button type="button" aria-label="形状图层过滤"><PathIcon className="size-[13px]" /></button>
                <button type="button" aria-label="智能对象过滤"><Icon box="0 0 12 12" className="size-[12px]"><path d="M3.600 5V.6h4l3.200 3v7.800H8M7.500.5v3.500H11" {...line} strokeWidth="1.200" /><path d="M1 6h5.500v6H1z" /></Icon></button>
            </div>
            <button type="button" aria-label="过滤开关" className="ml-[15px] flex h-[18px] w-[10px] items-start rounded-full border border-[#3c3c3c] bg-[#454545]">
                <span className="size-[8px] rounded-full bg-[#dedede]" />
            </button>
        </div>
        <div className="flex h-[29px] items-center border-b border-[#3c3c3c] pl-[3px] text-[12px]">
            <SelectBox label="混合模式" value="正常" className="h-[23px] w-[118px] pl-[8px]" />
            <span className="ml-[7px] w-[56px] whitespace-nowrap">不透明度:</span>
            <Combo label="不透明度" value="100%" className="w-[55px]" text="text-[11px]" />
        </div>
        <div className="flex h-[31px] items-center pb-[3px] pl-[7px] text-[12px]">
            <span className="w-[36px]">锁定:</span>
            <div className="flex items-center gap-[9px]">
                <Icon box="0 0 12 12" className="size-[12px] text-[#a6a6a6]"><path d="M.5.5h11v11H.5z" {...line} /><path d="M1 1h3v3H1zM7 1h3v3H7zM4 4h3v3H4zM1 7h3v3H1zM7 7h3v3H7z" /></Icon>
                <Icon className="size-[14px] text-[#a6a6a6]"><BrushShape /></Icon>
                <MoveIcon className="size-[14px]" />
                <Icon box="0 0 14 14" className="size-[14px]"><path d="M3 3.500h6l2.500 2V11H3zM3 0v2M0 3.500h2M12 11h2M11.500 12v2M3 12v2M0 11h2M12 3h2" {...line} strokeWidth="1.200" /></Icon>
                <Icon box="0 0 12 14" className="h-[13px] w-[12px]"><path d="M1 6h10v7H1z" /><path d="M3 6V4c0-4 6-4 6 0v2" {...line} strokeWidth="1.600" /><path d="M5 8.500h2v2H5z" fill="#535353" /></Icon>
            </div>
            <span className="ml-[7px] w-[32px] whitespace-nowrap">填充:</span>
            <Combo label="填充" value="100%" className="w-[55px]" text="text-[11px]" />
        </div>
        <div className="flex flex-1">
            <ul className="flex-1 bg-[#4d4d4d] text-[12px]">
                {layers.map((layer) => (
                    <li key={layer.name} className="flex h-[36px] border-b border-[#404040] bg-[#535353]">
                        <button type="button" aria-label="切换可见性" className="flex w-[30px] items-center justify-center border-r border-[#404040]">
                            <Icon box="0 0 14 10" className="h-[10px] w-[14px]"><path d="M0 5c3-5.500 11-5.500 14 0-3 5.500-11 5.500-14 0z" /><circle cx="7" cy="5" r="2.800" fill="#535353" /><circle cx="7" cy="5" r="1.500" /></Icon>
                        </button>
                        <div className={`flex flex-1 items-center pl-[4px] ${layer.selected ? "bg-[#6b6b6b]" : ""}`}>
                            <span className="flex h-[28px] w-[32px] items-end justify-end border border-[#2c2c2c] bg-white">
                                <svg viewBox="0 0 30 26" className="h-[26px] w-[30px]" fill="#7bd812">
                                    {layer.shape && (
                                        <>
                                            {layer.shape}
                                            <path d="M15 11h15v15H15z" fill="#5c5c5c" />
                                            <path d="M15.500 26V11.500H30" fill="none" stroke="#2c2c2c" />
                                            <path d="M20 14.500h5M20 23.500h5M18.500 16v6M26.500 16v6M17.500 13.500h2v2h-2zM25.500 13.500h2v2h-2zM17.500 22.500h2v2h-2zM25.500 22.500h2v2h-2z" fill="none" stroke="#dedede" />
                                        </>
                                    )}
                                </svg>
                            </span>
                            <span className="ml-[10px] flex-1 text-white">{layer.name}</span>
                            {!layer.selected && (
                                <Icon box="0 0 12 14" className="mr-[15px] h-[13px] w-[12px]"><path d="M1 5.500h10v7.500H1zM3.500 5.500V3.500c0-3.500 5-3.500 5 0v2" {...line} strokeWidth="1.200" /><path d="M5 8.500h2v2H5z" /></Icon>
                            )}
                        </div>
                    </li>
                ))}
            </ul>
            <div className="w-[16px] bg-[#4a4a4a]" />
        </div>
    </section>
);

const Annotations = () => (
    <div className="pointer-events-none absolute inset-0 z-20 overflow-hidden text-[21px] leading-[24px] whitespace-nowrap text-[#ff2213]">
        <svg className="absolute inset-0 h-full w-full" fill="#ff2213">
            <g fill="none" stroke="#ff2213" strokeWidth="3">
                <rect x="381.500" y="3.500" width="85" height="30" rx="1" />
                <rect x="3.500" y="59.500" width="35" height="27" rx="1" />
                <rect x="1578.500" y="736.500" width="233" height="105" rx="1" />
            </g>
            <path d="M443 40l12 6-5 2L482 97 445 50l-1 4z" />
            <path d="M490 31l13-4-2 3L975 163 499 36l1 5z" />
            <path d="M1180 243l1-1L1547 743l2-3 1 13-12-5 3-1z" />
        </svg>
        <p className="absolute top-[105px] left-[394px]">依次是左对齐、垂直分布、右对齐</p>
        <p className="absolute top-[189px] left-[944px]">移动模式下框选所有元素之后工具栏会显示对齐方式</p>
    </div>
);

const App = () => {
    return (
        <div className="relative flex min-h-screen flex-col bg-[#535353] font-['Open_Sans','Noto_Sans_CJK_SC',sans-serif] text-[#dedede]">
            <OptionsBar />
            <ImeBar />
            <div className="flex flex-1">
                <Toolbox />
                <Document />
                <Dock />
                {/* Right panels */}
                <aside className="ml-px flex w-[335px] flex-col border-x border-[#383838]">
                    <div className="flex h-[12px] justify-end border-b border-[#383838] bg-[#424242] pr-[6px]">
                        <Icon box="0 0 8 10" className="h-[10px] w-[8px]"><path d="M1 2.500L3.500 5 1 7.500M4.500 2.500L7 5 4.500 7.500" {...line} strokeWidth="1.300" /></Icon>
                    </div>
                    <ColorPanel />
                    <PropertiesPanel />
                    <LayersPanel />
                </aside>
            </div>
            <Annotations />
        </div>
    );
};

export default App;
